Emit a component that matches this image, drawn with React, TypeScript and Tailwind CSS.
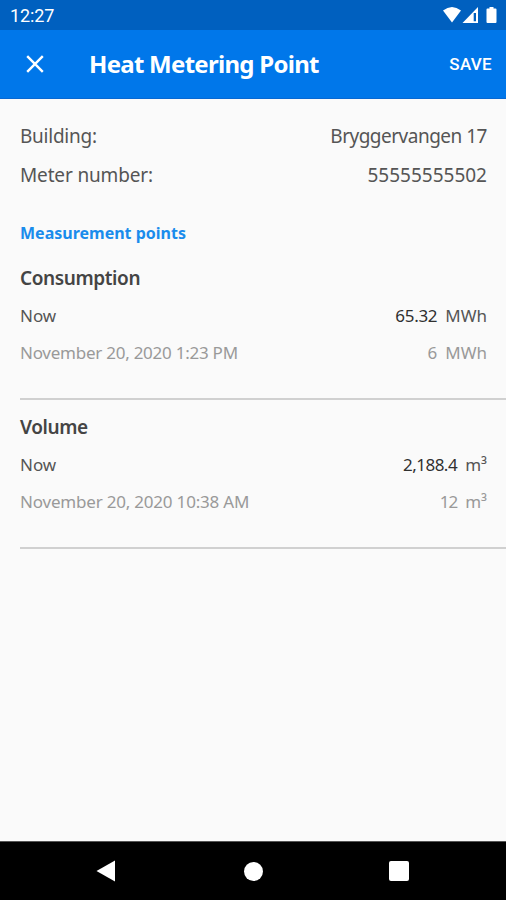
type Reading = {
  label: string;
  value: string;
  unit: string;
  cubed?: boolean;
  current?: boolean;
  labelClass?: string;
  valueClass?: string;
};

type Measurement = {
  title: string;
  readings: Reading[];
};

const MEASUREMENTS: Measurement[] = [
  {
    title: "Consumption",
    readings: [
      { label: "Now", value: "65.32", unit: "MWh", current: true, valueClass: "tracking-[-0.3px]" },
      { label: "November 20, 2020 1:23 PM", value: "6", unit: "MWh", labelClass: "tracking-[-0.25px]" },
    ],
  },
  {
    title: "Volume",
    readings: [
      { label: "Now", value: "2,188.4", unit: "m", cubed: true, current: true, valueClass: "tracking-[-0.5px]" },
      { label: "November 20, 2020 10:38 AM", value: "12", unit: "m", cubed: true, labelClass: "tracking-[-0.2px]", valueClass: "tracking-[-1px]" },
    ],
  },
];

function StatusBar() {
  return (
    <div className="flex h-[30px] items-center justify-between bg-[#0060bf] pl-[10px] pr-2 font-[Roboto,sans-serif] text-white">
      <span className="pt-[2px] text-[18px] leading-none tracking-[-0.1px]">12:27</span>
      <svg width="56" height="18" viewBox="0 0 56 18" fill="currentColor" aria-hidden="true">
        <path d="M1 4.6Q10 -2.4 19 4.6L10 16.500Z" />
        <path fillRule="evenodd" d="M36 1V17H20.500ZM31.700 7V15.200H34V7Z" />
        <path d="M47.500 1h4v1.600h2q1 0 1 1v12.400q0 1-1 1h-8q-1 0-1-1v-12.400q0-1 1-1h2Z" />
      </svg>
    </div>
  );
}

function AppBar() {
  return (
    <header className="flex h-[69px] items-center border-b border-[#0868d2] bg-[#0077ea] text-white">
      <button aria-label="Close" className="ml-[26px]">
        <svg width="18" height="18" viewBox="0 0 18 18" fill="none" stroke="currentColor" strokeWidth="2.4" aria-hidden="true">
          <path d="M1.200 1.200 16.800 16.800M16.800 1.200 1.200 16.800" />
        </svg>
      </button>
      <h1 className="ml-[45px] whitespace-nowrap text-[24px] font-bold leading-none tracking-[-0.72px]">Heat Metering Point</h1>
      <button className="ml-auto mr-[14px] font-[Roboto,sans-serif] text-[17px] font-medium leading-none tracking-[0.3px]">SAVE</button>
    </header>
  );
}

function ReadingRow({ reading }: { reading: Reading }) {
  return (
    <div className={`flex h-[37px] items-center justify-between pr-[19px] text-[17px] ${reading.current ? "text-[#555]" : "text-[#999]"}`}>
      <span className={reading.labelClass}>{reading.label}</span>
      <span className="flex gap-2">
        <span className={`${reading.valueClass ?? ""} ${reading.current ? "text-[#303030]" : ""}`}>{reading.value}</span>
        <span>
          {reading.unit}
          {reading.cubed && "³"}
        </span>
      </span>
    </div>
  );
}

function NavigationBar() {
  return (
    <nav className="grid h-[59px] grid-cols-[180px_147px_144px] border-t border-[#555] bg-black text-white">
      <button aria-label="Back" className="flex items-center pl-[96px]">
        <svg width="20" height="22" viewBox="0 0 20 22" fill="currentColor" aria-hidden="true">
          <path d="M.5 11 19 .5v21Z" />
        </svg>
      </button>
      <button aria-label="Home" className="flex items-center justify-center">
        <span className="size-[19px] rounded-full bg-white" />
      </button>
      <button aria-label="Recent apps" className="flex items-center justify-center">
        <span className="size-[20px] rounded-[2px] bg-white" />
      </button>
    </nav>
  );
}

export default function App() {
  return (
    <div className="flex h-[900px] w-[506px] flex-col overflow-hidden bg-[#fafafa] font-['Noto_Sans',sans-serif]">
      <StatusBar />
      <AppBar />
      <main className="flex-1 pl-5">
        <dl className="pr-[19px] pt-[18px] text-[19px] text-[#555]">
          <div className="flex h-[39px] items-center justify-between">
            <dt className="tracking-[-0.25px]">Building:</dt>
            <dd className="tracking-[-0.5px]">Bryggervangen 17</dd>
          </div>
          <div className="flex h-[39px] items-center justify-between">
            <dt className="tracking-[-0.15px]">Meter number:</dt>
            <dd>55555555502</dd>
          </div>
        </dl>
        <h2 className="flex h-[65px] items-center pt-[10px] text-[16px] font-bold text-[#1a8cec]">Measurement points</h2>
        {MEASUREMENTS.map((measurement) => (
          <section key={measurement.title} className="mb-[9px] h-[140px] border-b-2 border-[#d0d0d0]">
            <h3 className="flex h-[37px] items-center text-[19px] font-semibold tracking-[-0.4px] text-[#444]">{measurement.title}</h3>
            {measurement.readings.map((reading) => (
              <ReadingRow key={reading.label} reading={reading} />
            ))}
          </section>
        ))}
      </main>
      <NavigationBar />
    </div>
  );
}
